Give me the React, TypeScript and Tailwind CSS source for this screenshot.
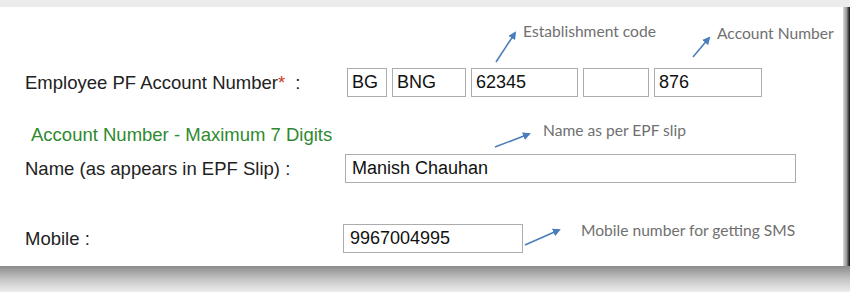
const arial = { fontFamily: '"Liberation Sans", Arial, sans-serif' };

const Box = ({ w, value, className = "" }: { w: string; value?: string; className?: string }) => (
  <div
    className={`h-[29px] ${w} border-[1.5px] border-[#acacac] bg-white pl-[4px] flex items-center text-[18px] text-[#111] ${className}`}
  >
    {value}
  </div>
);

const notes = [
  { text: "Establishment code", x: 523, y: 21 },
  { text: "Account Number", x: 717, y: 23 },
  { text: "Name as per EPF slip", x: 543, y: 120 },
  { text: "Mobile number for getting SMS", x: 581, y: 220 },
];

const arrows = [
  { x1: 496, y1: 62, x2: 515, y2: 33 },
  { x1: 693, y1: 57, x2: 709, y2: 38 },
  { x1: 495, y1: 147, x2: 529, y2: 134 },
  { x1: 525, y1: 245, x2: 559, y2: 230 },
];

export default function App() {
  return (
    <div className="relative w-[850px] h-[292px] overflow-hidden bg-white" style={arial}>
      {/* top strip */}
      <div className="h-[7px] bg-[#ececec]" />
      <div className="flex h-[259px]">
        {/* form panel */}
        <div className="w-[843px] bg-white pl-[25px] pt-[61px] text-[18.5px] text-[#222]">
          <div className="flex items-center">
            <div className="w-[322px]">
              Employee PF Account Number<span className="text-[#d03a2a]">*</span>
              <span className="ml-[10px]">:</span>
            </div>
            <div className="flex gap-[5px]">
              <Box w="w-[40px]" value="BG" />
              <Box w="w-[74px]" value="BNG" />
              <Box w="w-[107px]" value="62345" />
              <Box w="w-[66px]" value="" />
              <Box w="w-[108px]" value="876" />
            </div>
          </div>

          <div className="mt-[27px] ml-[6px] leading-[22px] text-[#2f8a2f]">
            Account Number - Maximum 7 Digits
          </div>

          <div className="mt-[8px] flex items-center">
            <div className="w-[320px]">Name (as appears in EPF Slip) :</div>
            <Box w="w-[451px]" value="Manish Chauhan" className="pl-[6px]" />
          </div>

          <div className="mt-[41px] flex items-center">
            <div className="w-[318px]">Mobile :</div>
            <Box w="w-[180px]" value="9967004995" className="pl-[6px]" />
          </div>
        </div>
        {/* right edge */}
        <div className="flex-1 bg-gradient-to-r from-[#d8d8d8] via-[#9a9a9a] to-[#111]" />
      </div>
      {/* bottom shadow */}
      <div className="h-[26px] bg-gradient-to-b from-[#8c8c8c] via-[#c4c4c4] to-[#ededed]" />

      {/* callout notes */}
      {notes.map((n) => (
        <div
          key={n.text}
          className="absolute text-[15.6px] leading-[20px] text-[#707070]"
          style={{ left: n.x, top: n.y, fontFamily: "Lato, 'Open Sans', sans-serif" }}
        >
          {n.text}
        </div>
      ))}
      <svg className="absolute inset-0 pointer-events-none" width={850} height={292}>
        <defs>
          <marker id="ah" markerWidth="8" markerHeight="8" refX="6" refY="4" orient="auto" markerUnits="userSpaceOnUse">
            <path d="M0,0 L8,4 L0,8 Z" fill="#4a7ebb" />
          </marker>
        </defs>
        {arrows.map((a, i) => (
          <line key={i} x1={a.x1} y1={a.y1} x2={a.x2} y2={a.y2} stroke="#4a7ebb" strokeWidth={1.6} markerEnd="url(#ah)" />
        ))}
      </svg>
    </div>
  );
}
